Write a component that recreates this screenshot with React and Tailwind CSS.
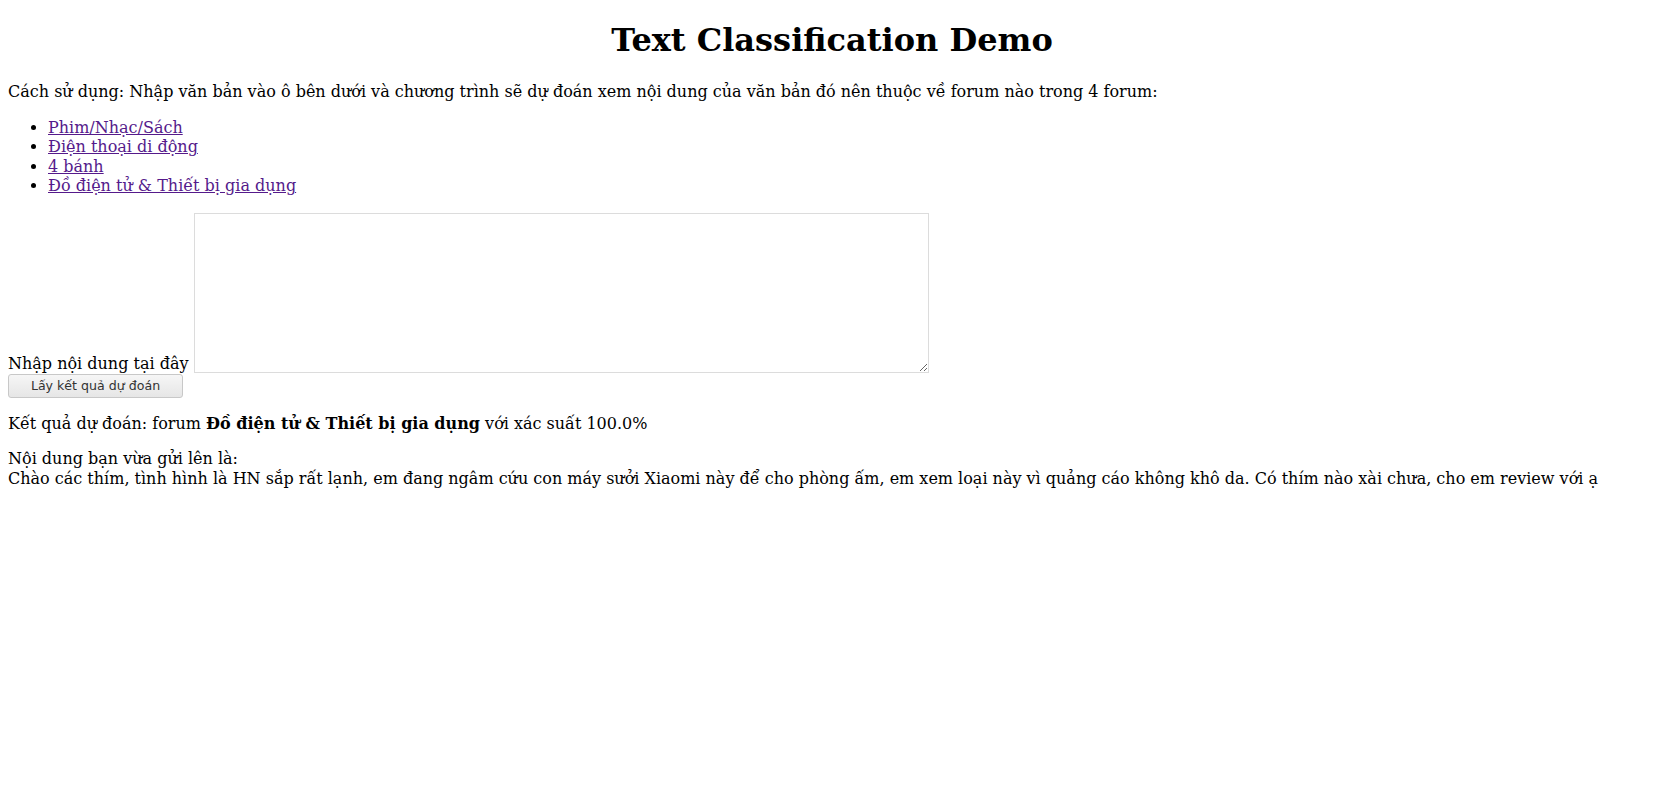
export default function App() {
  const forums = ['Phim/Nhạc/Sách', 'Điện thoại di động', '4 bánh', 'Đồ điện tử & Thiết bị gia dụng'];

  return (
    <div className="m-2 bg-white text-[16px] leading-[1.225] text-black" style={{ fontFamily: '"DejaVu Serif", serif' }}>
      <h1 className="my-[21.44px] text-center text-[32px] font-bold">Text Classification Demo</h1>

      <p className="my-4">
        Cách sử dụng: Nhập văn bản vào ô bên dưới và chương trình sẽ dự đoán xem nội dung của văn bản đó nên thuộc về forum nào trong 4 forum:
      </p>

      <ul className="my-4 list-disc pl-10">
        {forums.map((f) => (
          <li key={f}>
            <a href="#" className="text-[#551a8b] underline">
              {f}
            </a>
          </li>
        ))}
      </ul>

      <form>
        <label>Nhập nội dung tại đây </label>
        <textarea className="mt-px inline-block h-[160px] w-[735px] resize border border-[#dcdcdc] align-text-bottom" />
        <br />
        <button
          type="button"
          className="h-[24px] w-[175px] rounded-[3px] border border-[#c8c8c8] bg-gradient-to-b from-[#f6f6f6] to-[#e6e6e6] text-[12.6px] leading-[normal] text-[#333]"
          style={{ fontFamily: '"DejaVu Sans", sans-serif' }}
        >
          Lấy kết quả dự đoán
        </button>
      </form>

      <p className="my-4">
        Kết quả dự đoán: forum <b className="font-bold">Đồ điện tử &amp; Thiết bị gia dụng</b> với xác suất 100.0%
      </p>

      <p className="my-4">
        Nội dung bạn vừa gửi lên là:
        <br />
        Chào các thím, tình hình là HN sắp rất lạnh, em đang ngâm cứu con máy sưởi Xiaomi này để cho phòng ấm, em xem loại này vì quảng cáo không khô da. Có thím nào xài chưa, cho em review với ạ
      </p>
    </div>
  );
}
